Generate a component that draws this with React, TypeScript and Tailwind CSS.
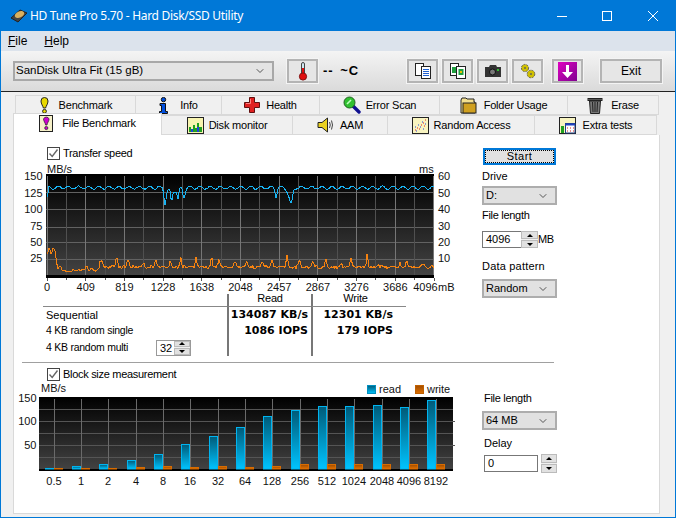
import type { ReactNode } from 'react'
import { ChevronDown } from 'lucide-react'

const SANS = "[font-family:'Liberation_Sans',Arial,sans-serif]"

/* ── chart data ── */
const bump = (x: number, c: number, w: number) => Math.exp(-(((x - c) / w) ** 2))
const noise = (i: number) => {
  const v = Math.sin(i * 12.9898) * 43758.5453
  return v - Math.floor(v)
}

const BLUE_DIPS = [
  [165, 15, 1.4], [171.5, 13, 1.4], [178, 11, 1.3], [184, 9, 1.6], [167.5, 3, 2], [175, 3, 2],
  [276, 9, 1.2], [291, 16, 2.2], [288, 4, 2],
]

const ORANGE_SPIKES = [
  [60, 5, 2], [86.5, 5, 1.2], [92, 2, 2], [101, 7, 1.8], [116.7, 11, 1.2], [128, 8, 1.3], [143, 4, 1.5],
  [155.7, 9, 1.2], [170.7, 5, 1.5], [180.7, 10, 1.1], [196, 9, 1.2], [211.7, 11, 1], [219, 7, 1.5],
  [235, 5, 1.5], [246.7, 7, 1.2], [262.7, 6, 1.5], [272, 7, 1.2], [287, 11, 1.2], [299.3, 7, 1.3],
  [313, 5, 1.6], [326, 9, 1.1], [340.7, 4, 1.6], [351, 9, 1.4], [367.3, 13, 1], [378.3, 3, 1.2],
  [400, 4, 1], [407, 7, 1.1], [422.7, 3, 1.8],
]

const line = (pts: number[][]) => pts.map(([x, y]) => `${x},${y.toFixed(1)}`).join(' ')

const bluePts = (() => {
  const out: number[][] = []
  for (let x = 47; x <= 434; x += 1) {
    let y = 187.7 + 1.5 * Math.sin(x * 0.62) + (noise(x) - 0.5) * 0.8
    if (x < 49) y = 197 - (x - 47) * 4
    for (const [c, d, w] of BLUE_DIPS) y += d * bump(x, c, w)
    out.push([x, y])
  }
  return out
})()

const orangePts = (() => {
  const out: number[][] = []
  for (let x = 47; x <= 434; x += 1) {
    let y: number
    if (x < 55) y = 251 + 3 * Math.sin(x * 1.5)
    else if (x < 58) y = 251 + (x - 55) * 7
    else if (x < 100) y = 271.5 + (noise(x) - 0.5) * 2 - (x > 72 ? 1 : 0)
    else y = 267 + (noise(x) - 0.5) * 3
    for (const [c, d, w] of ORANGE_SPIKES) y -= d * bump(x, c, w)
    out.push([x, y])
  }
  return out
})()

const BLOCKS = [
  { label: '0.5', x: 54, read: 468, write: 468 },
  { label: '1', x: 81, read: 466, write: 468 },
  { label: '2', x: 108, read: 464, write: 468 },
  { label: '4', x: 136, read: 460, write: 467 },
  { label: '8', x: 163, read: 454, write: 466 },
  { label: '16', x: 190, read: 444, write: 467 },
  { label: '32', x: 218, read: 436, write: 466 },
  { label: '64', x: 245, read: 427, write: 467 },
  { label: '128', x: 272, read: 416, write: 466 },
  { label: '256', x: 300, read: 410, write: 464 },
  { label: '512', x: 327, read: 406, write: 464 },
  { label: '1024', x: 354, read: 406, write: 464 },
  { label: '2048', x: 382, read: 405, write: 464 },
  { label: '4096', x: 409, read: 407, write: 464 },
  { label: '8192', x: 436, read: 400, write: 464 },
]

/* ── small widgets ── */
function Check() {
  return (
    <span className="w-[13px] h-[13px] border border-[#444] bg-white flex items-center justify-center shrink-0">
      <svg width="11" height="11" viewBox="0 0 11 11"><path d="M1.5 5.5 L4.2 8.5 L9.5 1.5" fill="none" stroke="#666" strokeWidth="1.4" /></svg>
    </span>
  )
}

function Select({ value, className = '' }: { value: string; className?: string }) {
  return (
    <div className={`flex items-center justify-between border-2 border-[#adadad] bg-[#e1e1e1] pl-[2px] pr-[6px] text-[11px] ${className}`}>
      <span>{value}</span>
      <ChevronDown className="w-[12px] h-[12px] text-[#555]" strokeWidth={2} />
    </div>
  )
}

function SpinButtons({ className = '' }: { className?: string }) {
  return (
    <div className={`flex flex-col gap-px bg-[#f0f0f0] ${className}`}>
      <div className="flex-1 bg-[#e1e1e1] border border-[#bbb] flex items-center justify-center">
        <span className="w-0 h-0 border-x-[3px] border-x-transparent border-b-[3px] border-b-black" />
      </div>
      <div className="flex-1 bg-[#e1e1e1] border border-[#bbb] flex items-center justify-center">
        <span className="w-0 h-0 border-x-[3px] border-x-transparent border-t-[3px] border-t-black" />
      </div>
    </div>
  )
}

function ToolBtn({ children, className = 'w-[32px]' }: { children: ReactNode; className?: string }) {
  return (
    <button className={`h-[24px] border-2 border-[#b4b4b4] bg-[#e6e6e6] outline outline-1 outline-[#f4f4f4] flex items-center justify-center ${className}`}>
      {children}
    </button>
  )
}

/* ── icons ── */
const Bang = ({ c = '#e8d800' }: { c?: string }) => (
  <svg width="11" height="17" viewBox="0 0 11 17">
    <path d="M2 4 a3.5 3.5 0 0 1 7 0 C9 7 7 9 6.6 11 H4.4 C4 9 2 7 2 4Z" fill={c} stroke="#222" />
    <circle cx="5.5" cy="14.3" r="1.9" fill={c} stroke="#222" />
  </svg>
)

const FileBang = () => (
  <svg width="15" height="17" viewBox="0 0 15 17">
    <rect x="0.5" y="0.5" width="13" height="16" fill="#f6f0c8" stroke="#222" />
    <path d="M4.5 4 a3 3 0 0 1 5.6 0 C10 6 8.2 8 8 10 H6.6 C6.4 8 4.5 6 4.5 4Z" fill="#d000d0" stroke="#222" strokeWidth="0.7" />
    <circle cx="7.3" cy="13" r="1.6" fill="#d000d0" stroke="#222" strokeWidth="0.7" />
  </svg>
)

const InfoIcon = () => (
  <svg width="9" height="17" viewBox="0 0 9 17">
    <circle cx="4.5" cy="2.6" r="2.2" fill="#0050e0" stroke="#111" />
    <path d="M1 6.5 H6.5 V14.5 H8.5 V16.5 H0.5 V14.5 H2.5 V8.5 H1Z" fill="#0050e0" stroke="#111" />
  </svg>
)

const CrossIcon = () => (
  <svg width="16" height="16" viewBox="0 0 16 16">
    <path d="M5.5 .5 H10.5 V5.5 H15.5 V10.5 H10.5 V15.5 H5.5 V10.5 H.5 V5.5 H5.5Z" fill="#e02020" stroke="#601010" />
    <path d="M6.5 2 V6.5 H2" fill="none" stroke="#ff8080" />
  </svg>
)

const ScanIcon = () => (
  <svg width="18" height="18" viewBox="0 0 18 18">
    <path d="M10 10 L16 16" stroke="#101090" strokeWidth="3.4" strokeLinecap="round" />
    <circle cx="6.5" cy="6.5" r="5.5" fill="#30c030" stroke="#206020" />
    <path d="M4 8 L8 4" stroke="#c0ffc0" strokeWidth="1.6" />
  </svg>
)

const FolderIcon = () => (
  <svg width="17" height="17" viewBox="0 0 17 17">
    <path d="M1 3 V16 H15 V5 H14 V2 H7 L6 1 H2Z" fill="#f4e090" stroke="#222" />
    <rect x="3" y="6" width="13" height="10" fill="#d0a020" stroke="#222" />
  </svg>
)

const TrashIcon = () => (
  <svg width="16" height="17" viewBox="0 0 16 17">
    <rect x="1" y="1.5" width="14" height="2" fill="#555" stroke="#222" />
    <path d="M2.5 4 H13.5 L12.5 16.5 H3.5Z" fill="#777" stroke="#222" />
    <path d="M5.5 5 L6 15 M8 5 V15 M10.5 5 L10 15" stroke="#222" />
  </svg>
)

const MonitorIcon = () => (
  <svg width="17" height="17" viewBox="0 0 17 17">
    <rect x="0.5" y="0.5" width="16" height="16" fill="#f8f4b0" stroke="#222" />
    <path d="M2 15 V10 H4 V12 H6 V8 H8 V11 H10 V6 H12 V10 H15 V15Z" fill="#20a020" />
    <path d="M4 15 V12 H6 V15 M10 15 V10 H12 V15" fill="#2040e0" />
  </svg>
)

const SpeakerIcon = () => (
  <svg width="17" height="16" viewBox="0 0 17 16">
    <path d="M1 5.5 H5 L10.5 1 V15 L5 10.5 H1Z" fill="#e8d020" stroke="#222" />
    <path d="M12.5 5 Q14 8 12.5 11 M14.5 3.5 Q16.5 8 14.5 12.5" fill="none" stroke="#444" />
  </svg>
)

const RandomIcon = () => (
  <svg width="17" height="17" viewBox="0 0 17 17">
    <rect x="0.5" y="0.5" width="16" height="16" fill="#f8f4c0" stroke="#222" />
    <path d="M3 13h1M5 11h1M7 12h1M9 8h1M11 6h1M13 3h1M12 9h1" stroke="#e02020" />
    <path d="M3 10h1M6 8h1M8 10h1M10 5h1M13 7h1M11 12h1M4 14h1" stroke="#2040e0" />
  </svg>
)

const ExtraIcon = () => (
  <svg width="17" height="17" viewBox="0 0 17 17">
    <rect x="0.5" y="0.5" width="16" height="16" fill="#f8f4c0" stroke="#222" />
    <path d="M2 16 V9 H5 V16Z" fill="#20a020" />
    <rect x="6.5" y="6.5" width="9.5" height="9.5" fill="#fff" stroke="#204080" />
    <rect x="6.5" y="6.5" width="9.5" height="2" fill="#2040c0" />
    <path d="M8 11h1M11 11h1M14 11h1M8 14h1M11 14h1M14 14h1" stroke="#d02020" />
  </svg>
)

const ROW1 = [
  { w: 'w-[121px] gap-[9px]', label: 'Benchmark', icon: <Bang /> },
  { w: 'w-[87px] gap-[12px]', label: 'Info', icon: <InfoIcon /> },
  { w: 'w-[99px] gap-[6px]', label: 'Health', icon: <CrossIcon /> },
  { w: 'w-[121px] gap-[5px]', label: 'Error Scan', icon: <ScanIcon /> },
  { w: 'w-[129px] gap-[7px]', label: 'Folder Usage', icon: <FolderIcon /> },
  { w: 'w-[92px] gap-[8px]', label: 'Erase', icon: <TrashIcon /> },
]

const ROW2 = [
  { w: 'w-[132px] gap-[5px]', label: 'Disk monitor', icon: <MonitorIcon /> },
  { w: 'w-[96px] gap-[6px]', label: 'AAM', icon: <SpeakerIcon /> },
  { w: 'w-[148px] gap-[5px]', label: 'Random Access', icon: <RandomIcon /> },
  { w: 'w-[123px] gap-[7px]', label: 'Extra tests', icon: <ExtraIcon /> },
]

function Tab({ w, label, icon }: { w: string; label: string; icon: ReactNode }) {
  return (
    <div className={`${w} h-[20px] border border-[#d9d9d9] -ml-px flex items-center justify-center text-[11px] tracking-[-0.2px] shrink-0`}>
      {icon}
      <span>{label}</span>
    </div>
  )
}

/* ── charts ── */
function TransferChart() {
  const ys = [192.5, 209.5, 227.5, 242.5, 259.5]
  const xl = ['0', '409', '819', '1228', '1638', '2048', '2457', '2867', '3276', '3686']
  const yl: [string, string, number][] = [['150', '60', 180], ['125', '50', 197], ['100', '40', 213], ['75', '30', 230], ['50', '20', 246], ['25', '10', 262]]
  return (
    <svg width="456" height="134" viewBox="14 160 456 134" className="block" fontFamily="'Liberation Sans', Arial, sans-serif" fontSize="11" fill="#111">
      <defs>
        <linearGradient id="plot1" x1="0" y1="0" x2="0" y2="1">
          <stop offset="0" stopColor="#000" />
          <stop offset="1" stopColor="#454545" />
        </linearGradient>
      </defs>
      <text x="47" y="172.5">MB/s</text>
      <text x="419" y="172.5">ms</text>
      <rect x="46" y="174" width="388" height="104" fill="url(#plot1)" />
      {ys.map(y => <line key={y} x1="46" x2="434" y1={y} y2={y} stroke="#626262" shapeRendering="crispEdges" />)}
      {Array.from({ length: 20 }, (_, i) => 47 + i * 19.35).map((x, i) => (
        <line key={x} x1={x} x2={x} y1="175" y2="275" stroke={i % 2 ? '#505050' : '#767676'} shapeRendering="crispEdges" />
      ))}
      <line x1="433.5" x2="433.5" y1="175" y2="275" stroke="#767676" shapeRendering="crispEdges" />
      <rect x="46" y="174" width="388" height="2" fill="#000" />
      <rect x="46" y="275" width="388" height="3" fill="#000" />
      {Array.from({ length: 21 }, (_, i) => 47 + i * 19.35).map((x, i) => (
        <line key={x} x1={x} x2={x} y1="278" y2={i % 2 ? 280 : 281} stroke="#555" shapeRendering="crispEdges" />
      ))}
      <polyline points={line(bluePts)} fill="none" stroke="#18b4f4" strokeWidth="1" shapeRendering="crispEdges" />
      <polyline points={line(orangePts)} fill="none" stroke="#f58210" strokeWidth="1" shapeRendering="crispEdges" />
      {yl.map(([a, b, y]) => (
        <g key={a}>
          <text x="42.5" y={y} textAnchor="end">{a}</text>
          <text x="438" y={y}>{b}</text>
        </g>
      ))}
      {xl.map((t, i) => (
        <text key={t} x={47 + i * 38.7} y="291" textAnchor="middle">{t}</text>
      ))}
      <text x="425.5" y="291" textAnchor="middle">4096</text>
      <text x="438" y="291">mB</text>
    </svg>
  )
}

function BlockChart() {
  return (
    <svg width="456" height="110" viewBox="14 381 456 110" className="block" fontFamily="'Liberation Sans', Arial, sans-serif" fontSize="11" fill="#111">
      <defs>
        <linearGradient id="plot2" x1="0" y1="0" x2="0" y2="1">
          <stop offset="0" stopColor="#000" />
          <stop offset="1" stopColor="#444" />
        </linearGradient>
        <linearGradient id="readBar" x1="0" y1="0" x2="0" y2="1">
          <stop offset="0" stopColor="#005a78" />
          <stop offset="1" stopColor="#00c4ff" />
        </linearGradient>
        <linearGradient id="writeBar" x1="0" y1="0" x2="0" y2="1">
          <stop offset="0" stopColor="#a04c00" />
          <stop offset="1" stopColor="#e07000" />
        </linearGradient>
      </defs>
      <text x="41" y="392">MB/s</text>
      <rect x="367.5" y="385.5" width="8" height="8" fill="url(#readBar)" stroke="#0090c0" />
      <text x="379" y="393">read</text>
      <rect x="415.5" y="385.5" width="8" height="8" fill="url(#writeBar)" stroke="#c06000" />
      <text x="427" y="393">write</text>
      <rect x="39" y="397" width="414" height="74" fill="url(#plot2)" />
      {[409, 421.5, 433, 445.5, 457.5].map((y, i) => (
        <line key={y} x1="39" x2={i % 2 ? 455 : 453} y1={y} y2={y} stroke="#555" shapeRendering="crispEdges" />
      ))}
      {BLOCKS.map(b => (
        <line key={b.label} x1={b.x + 0.5} x2={b.x + 0.5} y1="398" y2="470" stroke="#6a6a6a" />
      ))}
      <rect x="39" y="397" width="414" height="2" fill="#000" />
      <rect x="39" y="469" width="414" height="2" fill="#000" />
      {BLOCKS.map(b => (
        <g key={b.label}>
          <rect x={b.x - 8.5} y={b.read + 0.5} width="8" height={468.5 - b.read} fill="url(#readBar)" stroke="#00b4f0" />
          <rect x={b.x + 0.5} y={b.write + 0.5} width="8" height={468.5 - b.write} fill="url(#writeBar)" stroke="#d86c00" />
          <text x={b.x} y="484.5" textAnchor="middle">{b.label}</text>
        </g>
      ))}
      <text x="36.5" y="402" textAnchor="end">150</text>
      <text x="36.5" y="425" textAnchor="end">100</text>
      <text x="36.5" y="449" textAnchor="end">50</text>
    </svg>
  )
}

export default function App() {
  return (
    <div className={`w-[676px] h-[518px] flex flex-col border border-[#0078d7] bg-[#f0f0f0] text-black overflow-hidden ${SANS}`}>
      {/* Title bar */}
      <div className="h-[30px] bg-[#0078d7] flex items-center shrink-0 text-white">
        <svg width="18" height="16" viewBox="0 0 18 16" className="ml-[9px]">
          <path d="M1 10 L10 2 L17 5 L8 14Z" fill="#444" stroke="#222" />
          <ellipse cx="9.5" cy="6.5" rx="5" ry="3" fill="#d8b060" transform="rotate(-25 9.5 6.5)" />
        </svg>
        <span className="ml-[2px] text-[12px] tracking-[-0.3px] [font-family:'Noto_Sans',sans-serif]">HD Tune Pro 5.70 - Hard Disk/SSD Utility</span>
        <div className="ml-auto flex">
          <button className="w-[45px] h-[30px] flex items-center justify-center"><span className="w-[10px] h-px bg-white" /></button>
          <button className="w-[46px] h-[30px] flex items-center justify-center"><span className="w-[10px] h-[10px] border border-white" /></button>
          <button className="w-[45px] h-[30px] flex items-center justify-center">
            <svg width="10" height="10" viewBox="0 0 10 10"><path d="M0 0 L10 10 M10 0 L0 10" stroke="#fff" /></svg>
          </button>
        </div>
      </div>

      {/* Menu */}
      <div className="h-[20px] bg-[#dce3ec] flex items-center gap-[17px] pl-[7px] text-[12px] shrink-0">
        <span><u>F</u>ile</span>
        <span><u>H</u>elp</span>
      </div>

      {/* Toolbar */}
      <div className="h-[40px] bg-gradient-to-b from-[#f4f4f4] to-[#dadada] border-b border-[#222] flex items-center pl-[12px] shrink-0 box-content">
        <Select value="SanDisk Ultra Fit (15 gB)" className="w-[261px] h-[20px] !text-[11.5px] !bg-[#e4e4e4] !pl-[1px] !border-[#a8a8a8]" />
        <ToolBtn className="w-[31px] ml-[13px]">
          <svg width="12" height="19" viewBox="0 0 12 19">
            <rect x="4.5" y="0.5" width="3" height="12" rx="1.5" fill="#d0e8f0" stroke="#444" />
            <rect x="5" y="6" width="2" height="7" fill="#e01010" />
            <circle cx="6" cy="14.5" r="3.6" fill="#e01010" stroke="#801010" />
          </svg>
        </ToolBtn>
        <span className="ml-[5px] text-[13px] tracking-[1px] [word-spacing:2px] font-bold w-[84px]">-- ~C</span>
        <ToolBtn className="w-[31px]">
          <svg width="16" height="16" viewBox="0 0 16 16">
            <rect x="0.5" y="0.5" width="8" height="12" fill="#fff" stroke="#222" />
            <rect x="6.5" y="3.5" width="9" height="12" fill="#fff" stroke="#222" />
            <path d="M8 6.5h6M8 8.5h6M8 10.5h6M8 12.5h6" stroke="#2060d0" />
          </svg>
        </ToolBtn>
        <ToolBtn className="w-[31px] ml-[4px]">
          <svg width="16" height="16" viewBox="0 0 16 16">
            <rect x="0.5" y="0.5" width="8" height="12" fill="#fff" stroke="#222" />
            <rect x="6.5" y="3.5" width="9" height="12" fill="#fff" stroke="#222" />
            <rect x="2" y="4" width="4" height="6" fill="#20a040" />
            <rect x="8.5" y="6" width="5" height="6" fill="#20a040" />
            <rect x="10" y="8" width="2" height="2" fill="#e8c000" />
          </svg>
        </ToolBtn>
        <ToolBtn className="w-[31px] ml-[4px]">
          <svg width="16" height="14" viewBox="0 0 16 14">
            <path d="M0 3 H4 L5 1 H11 L12 3 H16 V13 H0Z" fill="#333" />
            <circle cx="7.5" cy="8" r="3" fill="#777" stroke="#111" />
            <rect x="12" y="5" width="2" height="2" fill="#30c030" />
          </svg>
        </ToolBtn>
        <ToolBtn className="w-[31px] ml-[4px]">
          <svg width="16" height="16" viewBox="0 0 16 16">
            <circle cx="5" cy="5" r="3.6" fill="#d0c000" stroke="#665" strokeDasharray="2 1" />
            <circle cx="11" cy="11" r="3.8" fill="#d0c000" stroke="#665" strokeDasharray="2 1" />
            <circle cx="5" cy="5" r="1" fill="#665" />
            <circle cx="11" cy="11" r="1" fill="#665" />
          </svg>
        </ToolBtn>
        <ToolBtn className="w-[31px] ml-[9px]">
          <span className="w-[19px] h-[19px] bg-gradient-to-br from-[#e000c0] to-[#800090] flex items-center justify-center">
            <svg width="13" height="13" viewBox="0 0 13 13"><path d="M5 0 H8 V7 H12 L6.5 13 L1 7 H5Z" fill="#fff" /></svg>
          </span>
        </ToolBtn>
        <ToolBtn className="w-[62px] ml-[17px]">
          <span className="text-[12px]">Exit</span>
        </ToolBtn>
      </div>

      {/* Tabs */}
      <div className="flex flex-col pt-[3px] shrink-0">
        <div className="flex ml-[15px]">
          {ROW1.map(t => <Tab key={t.label} {...t} />)}
        </div>
        <div className="flex items-end ml-[12px] -mt-[2px] h-[22px]">
          <div className="w-[149px] h-[22px] bg-white border-x border-t border-[#d9d9d9] flex items-center justify-center gap-[8px] text-[11px] tracking-[-0.2px] pb-[3px]">
            <FileBang />
            <span>File Benchmark</span>
          </div>
          {ROW2.map(t => <Tab key={t.label} {...t} />)}
        </div>
      </div>

      {/* Panel */}
      <div className="ml-[12px] mr-[15px] h-[379px] bg-white border-x border-b border-[#d9d9d9] flex text-[11px]">
        {/* Left column */}
        <div className="w-[456px] shrink-0 flex flex-col">
          <label className="flex items-center gap-[3px] h-[13px] mt-[12px] ml-[33px]">
            <Check />
            <span className="tracking-[-0.3px]">Transfer speed</span>
          </label>
          <TransferChart />

          <div className="ml-[29px] w-[363px] h-[62px] grid grid-cols-[184px_84px_95px] grid-rows-[13px_16px_16px_17px]">
            <div className="border-b border-[#888]" />
            <div className="border-l-2 border-b border-[#777] border-b-[#888] text-center leading-[8px] tracking-[-0.2px]">Read</div>
            <div className="border-l-2 border-b border-[#777] border-b-[#888] text-center leading-[8px] tracking-[-0.2px] pr-[8px]">Write</div>

            <div className="pl-[3px] flex items-center">Sequential</div>
            <div className="border-l-2 border-[#777] text-right pr-[3px] font-bold [font-family:'DejaVu_Sans',sans-serif] flex items-center justify-end whitespace-nowrap">134087 KB/s</div>
            <div className="border-l-2 border-[#777] pr-[13px] font-bold [font-family:'DejaVu_Sans',sans-serif] flex items-center justify-end whitespace-nowrap">12301 KB/s</div>

            <div className="pl-[3px] flex items-center text-[10.5px] tracking-[-0.25px]">4 KB random single</div>
            <div className="border-l-2 border-[#777] pr-[3px] font-bold [font-family:'DejaVu_Sans',sans-serif] flex items-center justify-end">1086 IOPS</div>
            <div className="border-l-2 border-[#777] pr-[13px] font-bold [font-family:'DejaVu_Sans',sans-serif] flex items-center justify-end">179 IOPS</div>

            <div className="pl-[3px] flex items-center justify-between">
              <span className="text-[10.5px] tracking-[-0.25px]">4 KB random multi</span>
              <div className="w-[35px] h-[16px] border border-[#999] flex items-stretch mr-[36px]">
                <span className="flex-1 pl-[3px] leading-[14px]">32</span>
                <SpinButtons className="w-[16px]" />
              </div>
            </div>
            <div className="border-l-2 border-[#777]" />
            <div className="border-l-2 border-[#777]" />
          </div>

          <div className="h-px bg-[#a0a0a0] ml-[8px] mt-[6px] w-[532px] shrink-0" />

          <label className="flex items-center gap-[3px] h-[13px] mt-[5px] ml-[33px]">
            <Check />
            <span className="tracking-[-0.3px]">Block size measurement</span>
          </label>
          <BlockChart />
        </div>

        {/* Right column */}
        <div className="pl-[12px] flex flex-col items-start">
          <button className="mt-[13px] ml-[1px] w-[73px] h-[17px] border-2 border-[#0078d7] bg-[#e1e1e1] flex items-center justify-center outline-1 outline-dotted outline-black -outline-offset-3 tracking-[0.5px]">Start</button>
          <span className="mt-[5px] leading-[13px]">Drive</span>
          <Select value="D:" className="mt-[3px] w-[75px] h-[19px]" />
          <span className="mt-[4px] leading-[13px] tracking-[-0.3px]">File length</span>
          <div className="mt-[9px] flex items-center">
            <div className="w-[39px] h-[17px] border border-[#777] border-r-0 pl-[3px] leading-[15px]">4096</div>
            <SpinButtons className="w-[17px] h-[17px]" />
            <span className="tracking-[-0.5px]">MB</span>
          </div>
          <span className="mt-[12px] leading-[13px] tracking-[0.2px]">Data pattern</span>
          <Select value="Random" className="mt-[6px] w-[75px] h-[19px]" />

          <span className="mt-[94px] ml-[2px] leading-[13px] tracking-[-0.3px]">File length</span>
          <Select value="64 MB" className="mt-[6px] w-[75px] h-[19px]" />
          <span className="mt-[7px] ml-[2px] leading-[13px]">Delay</span>
          <div className="mt-[4px] flex items-center">
            <div className="w-[54px] h-[17px] ml-[2px] border border-[#777] pl-[3px] leading-[15px]">0</div>
            <SpinButtons className="w-[16px] h-[19px] ml-[3px]" />
          </div>
        </div>
      </div>
    </div>
  )
}
